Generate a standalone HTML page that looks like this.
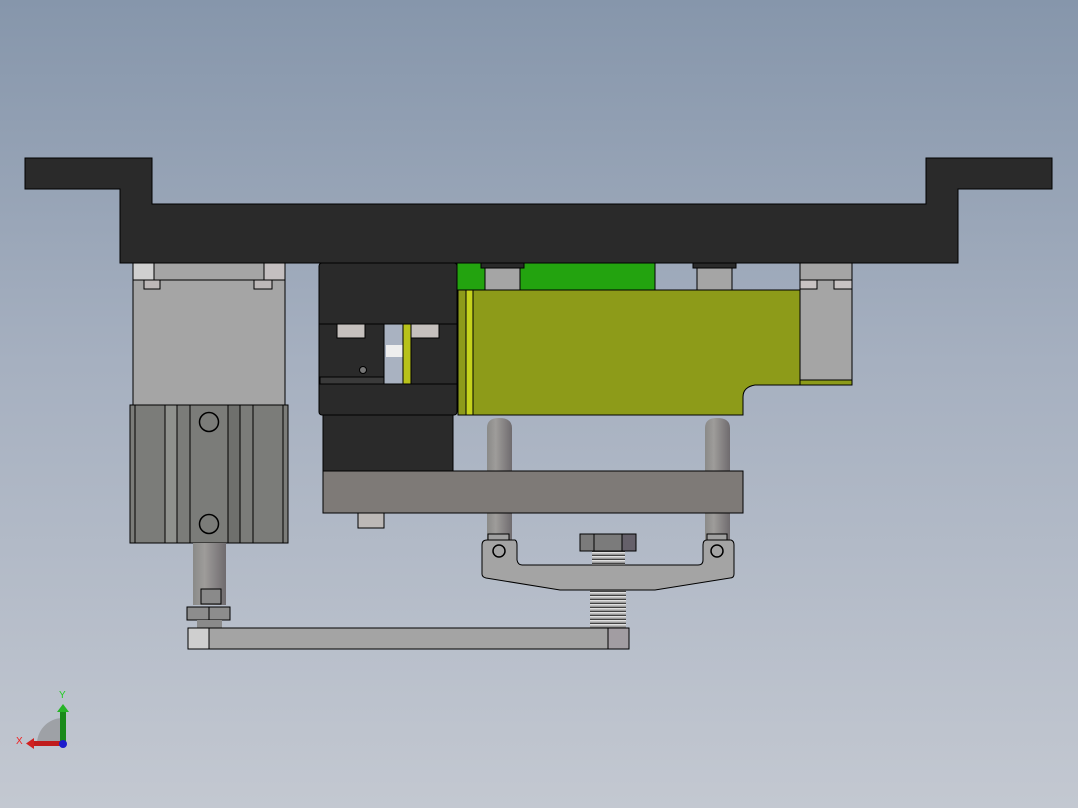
<!DOCTYPE html>
<html><head><style>
html,body{margin:0;padding:0;width:1078px;height:808px;overflow:hidden}
body{background:linear-gradient(#8696ab 0%,#a6b0c0 45%,#c3c8d1 100%)}
</style></head><body>
<svg width="1078" height="808" viewBox="0 0 1078 808" xmlns="http://www.w3.org/2000/svg" style="position:absolute;left:0;top:0">
<defs>
<linearGradient id="rod" x1="0" x2="1"><stop offset="0" stop-color="#8a8a88"/><stop offset=".35" stop-color="#9e9c9a"/><stop offset="1" stop-color="#6f6b6e"/></linearGradient>
<linearGradient id="thr" x1="0" y1="0" x2="0" y2="1" spreadMethod="repeat"><stop offset="0" stop-color="#eee"/><stop offset=".5" stop-color="#666"/><stop offset="1" stop-color="#ddd"/></linearGradient>
<pattern id="th" width="6" height="4" patternUnits="userSpaceOnUse"><rect width="6" height="4" fill="#999"/><rect y="0" width="6" height="1.5" fill="#e0e0e0"/><rect y="3" width="6" height="1" fill="#444"/></pattern>
</defs>
<g stroke="#000" stroke-width="1">
<!-- top plate -->
<polygon points="25,158 152,158 152,204 926,204 926,158 1052,158 1052,189 958,189 958,263 120,263 120,189 25,189" fill="#2a2a2a"/>
<!-- left cylinder -->
<rect x="133" y="263" width="152" height="142" fill="#a5a5a5"/>
<line x1="133" y1="280" x2="285" y2="280"/>
<rect x="133" y="263" width="21" height="17" fill="#d0d0d0"/>
<rect x="264" y="263" width="21" height="17" fill="#c4bfc0"/>
<rect x="144" y="280" width="16" height="9" fill="#bdb8b8"/>
<rect x="254" y="280" width="18" height="9" fill="#bdb8b8"/>
<rect x="130" y="405" width="158" height="138" fill="#7b7c79"/>
<rect x="165" y="405" width="12" height="138" fill="#8f918d"/>
<rect x="228" y="405" width="12" height="138" fill="#6f706d"/>
<line x1="135" y1="405" x2="135" y2="543"/><line x1="165" y1="405" x2="165" y2="543"/><line x1="177" y1="405" x2="177" y2="543"/><line x1="190" y1="405" x2="190" y2="543"/><line x1="228" y1="405" x2="228" y2="543"/><line x1="240" y1="405" x2="240" y2="543"/><line x1="253" y1="405" x2="253" y2="543"/><line x1="283" y1="405" x2="283" y2="543"/>
<circle cx="209" cy="422" r="9.5" fill="none" stroke-width="1.5"/>
<circle cx="209" cy="524" r="9.5" fill="none" stroke-width="1.5"/>
<rect x="193" y="543" width="33" height="62" fill="url(#rod)" stroke="none"/>
<rect x="201" y="589" width="20" height="15" fill="#8a8a8a"/>
<rect x="187" y="607" width="43" height="13" fill="#8d8d8d"/>
<line x1="209" y1="607" x2="209" y2="620"/>
<rect x="197" y="620" width="25" height="8" fill="#8a8a8a" stroke="none"/>
<!-- bottom bar -->
<rect x="188" y="628" width="441" height="21" fill="#a4a4a4"/>
<rect x="188" y="628" width="21" height="21" fill="#cfcfcf"/>
<rect x="608" y="628" width="21" height="21" fill="#a29da2"/>
<!-- black block -->
<rect x="319" y="263" width="138" height="152" rx="3" fill="#2a2a2a"/>
<rect x="323" y="415" width="130" height="56" fill="#2a2a2a"/>
<rect x="384" y="324" width="19" height="60" fill="#a9b2c1" stroke-width="1"/>
<line x1="319" y1="324" x2="457" y2="324"/><line x1="319" y1="384" x2="457" y2="384"/>
<rect x="320" y="377" width="64" height="7" fill="#3a3a3a"/>
<rect x="337" y="324" width="28" height="14" fill="#c5c0bd"/>
<rect x="411" y="324" width="28" height="14" fill="#c5c0bd"/>
<rect x="386" y="345" width="17" height="12" fill="#eee" stroke="none"/>
<circle cx="363" cy="370" r="3.5" fill="#777"/>
<rect x="403" y="324" width="8" height="60" fill="#b8c21a"/>
<!-- green -->
<rect x="457" y="263" width="198" height="27" fill="#23a30f"/>
<rect x="485" y="266" width="35" height="24" fill="#a5a5a5"/>
<rect x="697" y="266" width="35" height="24" fill="#a5a5a5"/>
<rect x="481" y="263" width="43" height="5" fill="#2a2a2a"/>
<rect x="693" y="263" width="43" height="5" fill="#2a2a2a"/>
<!-- olive -->
<rect x="458" y="290" width="8" height="125" fill="#8e9b1a"/>
<rect x="466" y="290" width="7" height="125" fill="#c5d21c"/>
<path d="M473,290 H800 V385 H852 V385 H755 Q743,387 743,397 V415 H473 Z" fill="#8d9b19"/>
<rect x="800" y="380" width="52" height="5" fill="#8d9b19"/>
<rect x="800" y="263" width="52" height="117" fill="#a5a5a5"/>
<line x1="800" y1="280" x2="852" y2="280"/>
<rect x="800" y="280" width="17" height="9" fill="#c8c3c3"/>
<rect x="834" y="280" width="18" height="9" fill="#c8c3c3"/>
<!-- pins -->
<path d="M487,540 V428 Q487,418 499,418 Q512,418 512,428 V540 Z" fill="url(#rod)" stroke="none"/>
<path d="M705,540 V428 Q705,418 717,418 Q730,418 730,428 V540 Z" fill="url(#rod)" stroke="none"/>
<!-- gray plate -->
<rect x="323" y="471" width="420" height="42" fill="#7e7a77"/>
<rect x="358" y="513" width="26" height="15" fill="#bcb8b6"/>
<!-- thread -->
<rect x="592" y="551" width="33" height="14" fill="url(#th)" stroke="none"/>
<rect x="590" y="590" width="36" height="38" fill="url(#th)" stroke="none"/>
<!-- bracket -->
<path d="M487,540 H515 Q517,541 517,545 V560 Q518,565 522,565 H698 Q703,565 703,560 V545 Q703,540 707,540 H731 Q734,541 734,545 V574 Q734,578 730,578 L655,590 H560 L486,578 Q482,577 482,574 V545 Q482,540 487,540 Z" fill="#a4a4a4"/>
<circle cx="499" cy="551" r="6" fill="none" stroke-width="1.5"/>
<circle cx="717" cy="551" r="6" fill="none" stroke-width="1.5"/>
<rect x="488" y="534" width="21" height="6" fill="#a0a0a0"/>
<rect x="707" y="534" width="20" height="6" fill="#a0a0a0"/>
<rect x="580" y="534" width="56" height="17" fill="#7b7b7b"/>
<rect x="622" y="534" width="14" height="17" fill="#65606a"/>
<line x1="594" y1="534" x2="594" y2="551"/><line x1="622" y1="534" x2="622" y2="551"/>
</g>
<!-- triad -->
<path d="M37,745 A26,26 0 0 1 62,718 V745 Z" fill="#9ea1a6"/>
<rect x="60" y="710" width="6" height="34" fill="#1a8a1a"/>
<polygon points="57,712 63,704 69,712" fill="#27b427"/>
<rect x="32" y="741" width="32" height="5" fill="#c01c1c"/>
<polygon points="34,738 26,743.5 34,749" fill="#d02020"/>
<circle cx="63" cy="744" r="4" fill="#1c1ccc"/>
<text x="59" y="698" font-family="Liberation Sans,sans-serif" font-size="10" fill="#2c2">Y</text>
<text x="16" y="744" font-family="Liberation Sans,sans-serif" font-size="10" fill="#e22">X</text>
</svg>
</body></html>
